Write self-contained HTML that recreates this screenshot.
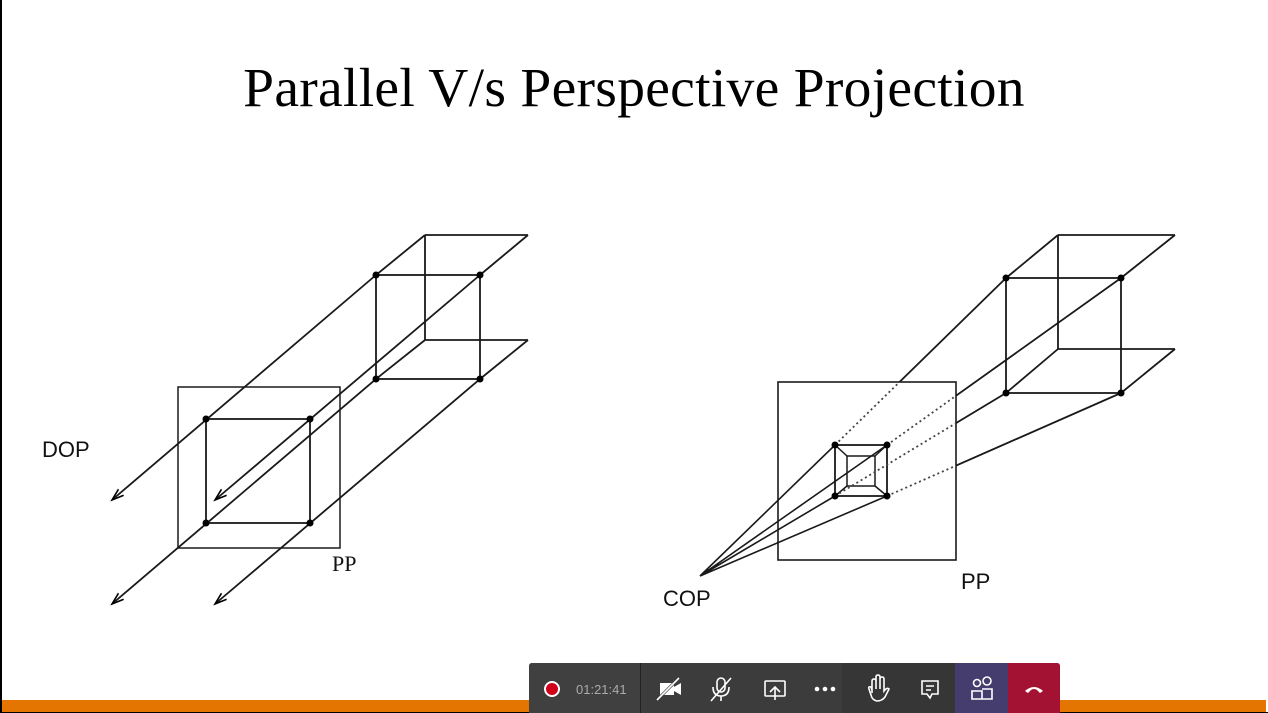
<!DOCTYPE html>
<html><head><meta charset="utf-8"><style>
body{margin:0;width:1268px;height:713px;overflow:hidden;background:#fff;position:relative;font-family:"Liberation Sans",sans-serif}
.t{position:absolute;left:0;width:1268px;top:57px;text-align:center;font-family:"Liberation Serif",serif;font-size:55.5px;color:#000;letter-spacing:0.3px;padding-left:0}
.bar{position:absolute;left:2px;top:700px;width:1264px;height:12px;background:#e37500}
.tb{position:absolute;left:529px;top:663px;width:531px;height:50px;background:#3c3c3c;border-radius:3px 3px 0 0;overflow:hidden}
.s{position:absolute;top:0;height:50px}
</style></head><body>
<div style="position:absolute;left:0;top:0;width:2px;height:713px;background:#000"></div>
<div style="position:absolute;left:0;top:712px;width:1268px;height:1px;background:#000"></div>
<div class="t">Parallel V/s Perspective Projection</div>
<svg width="1268" height="713" style="position:absolute;left:0;top:0" font-family="Liberation Sans">
<defs>
<clipPath id="in"><rect x="778" y="382" width="178" height="178"/></clipPath>
<mask id="out"><rect width="1268" height="713" fill="#fff"/><rect x="778" y="382" width="178" height="178" fill="#000"/></mask>
<marker id="ar" markerUnits="userSpaceOnUse" markerWidth="14" markerHeight="10" refX="12" refY="5" orient="auto"><path d="M0,1 L12,5 L0,9" fill="none" stroke="#000" stroke-width="1.6"/></marker>
</defs>
<g stroke="#1a1a1a" stroke-width="1.8" fill="none">
<rect x="178" y="387" width="162" height="161" stroke-width="1.5"/>
<rect x="206" y="419" width="104" height="104"/>
<rect x="376" y="275" width="104" height="104"/>
<path d="M425,235 H528 M425,235 V340 H528 M376,275 L425,235 M480,275 L528,235 M376,379 L425,340 M480,379 L528,340"/>
<path d="M376,275 L112,500" marker-end="url(#ar)"/>
<path d="M480,275 L215,500" marker-end="url(#ar)"/>
<path d="M376,379 L112,604" marker-end="url(#ar)"/>
<path d="M480,379 L215,604" marker-end="url(#ar)"/>
<rect x="778" y="382" width="178" height="178" stroke-width="1.6"/>
<rect x="1006" y="278" width="115" height="115"/>
<path d="M1058,235 H1175 M1058,235 V349 H1175 M1006,278 L1058,235 M1121,278 L1175,235 M1006,393 L1058,349 M1121,393 L1175,349"/>
<rect x="835" y="445" width="52" height="51"/>
<rect x="847" y="456" width="28" height="30" stroke-width="1.5"/>
<path d="M835,445 L847,456 M887,445 L875,456 M835,496 L847,486 M887,496 L875,486" stroke-width="1.5"/>
<path d="M700,576 L835,445 M700,576 L887,445 M700,576 L835,496 M700,576 L887,496" stroke-width="1.6"/>
<g mask="url(#out)"><path d="M835,445 L1006,278 M887,445 L1121,278 M835,496 L1006,393 M887,496 L1121,393"/></g>
<g clip-path="url(#in)" stroke-dasharray="2,3" stroke="#444"><path d="M835,445 L1006,278 M887,445 L1121,278 M835,496 L1006,393 M887,496 L1121,393"/></g>
</g>
<g fill="#000">
<circle cx="206" cy="419" r="3.5"/><circle cx="310" cy="419" r="3.5"/><circle cx="206" cy="523" r="3.5"/><circle cx="310" cy="523" r="3.5"/>
<circle cx="376" cy="275" r="3.5"/><circle cx="480" cy="275" r="3.5"/><circle cx="376" cy="379" r="3.5"/><circle cx="480" cy="379" r="3.5"/>
<circle cx="1006" cy="278" r="3.5"/><circle cx="1121" cy="278" r="3.5"/><circle cx="1006" cy="393" r="3.5"/><circle cx="1121" cy="393" r="3.5"/>
<circle cx="835" cy="445" r="3.5"/><circle cx="887" cy="445" r="3.5"/><circle cx="835" cy="496" r="3.5"/><circle cx="887" cy="496" r="3.5"/>
</g>
<text x="42" y="457" font-size="22" fill="#111">DOP</text>
<text x="332" y="571" font-size="22" font-family="Liberation Serif" fill="#111">PP</text>
<text x="663" y="606" font-size="22" fill="#111">COP</text>
<text x="961" y="589" font-size="22" fill="#111">PP</text>
</svg>
<div class="bar"></div>
<div class="tb">
<div class="s" style="left:0;width:111px;background:#404040"></div>
<div class="s" style="left:111px;width:1px;background:#222"></div>
<div class="s" style="left:313px;width:113px;background:#363636"></div>
<div class="s" style="left:426px;width:53px;background:#453d6e"></div>
<div class="s" style="left:479px;width:52px;background:#a31232"></div>
<svg width="531" height="50" style="position:absolute;left:0;top:0" fill="none" stroke="#fff" stroke-width="1.6">
<circle cx="23" cy="26" r="7" fill="#d0021b" stroke="#fff" stroke-width="2"/>
<text x="47" y="31" font-family="Liberation Sans" font-size="13" fill="#aaa" stroke="none">01:21:41</text>
<rect x="131" y="20" width="14" height="12" fill="#fff" stroke="none"/><path d="M145,24 L152,20 V32 L145,28Z" fill="#fff" stroke="none"/><path d="M128,37 L150,15" stroke="#3c3c3c" stroke-width="3"/><path d="M128,37 L150,15"/>
<rect x="188" y="15" width="8" height="14" rx="4"/><path d="M184,24 Q184,33 192,33 Q200,33 200,24 M192,33 V38 M182,38 L202,15"/>
<rect x="236" y="18" width="20" height="15" rx="1"/><path d="M246,37 V24 M241,29 L246,24 L251,29"/>
<circle cx="288" cy="26" r="2.3" fill="#fff" stroke="none"/><circle cx="296" cy="26" r="2.3" fill="#fff" stroke="none"/><circle cx="304" cy="26" r="2.3" fill="#fff" stroke="none"/>
<path d="M343,30 V18 Q343,16 345,16 Q347,16 347,18 V26 M347,18 V14 Q347,12 349,12 Q351,12 351,14 V26 M351,16 Q351,14 353,14 Q355,14 355,16 V28 Q358,24 360,26 L356,34 Q353,38 348,38 Q343,37 342,32 L340,26 Q339,23 342,24 L343,27"/>
<path d="M393,18 H409 V31 H403 L401,35 L398,31 H393Z M397,23 H405 M397,27 H402"/>
<circle cx="448" cy="20" r="3.5"/><circle cx="458" cy="18" r="4"/><path d="M443,36 V28 H453 V36 Z M453,36 H463 V26 H453"/>
<path d="M496,28 Q505,20 514,28 L511,30 L508,27 Q505,25 502,27 L499,30Z" fill="#fff" stroke="none"/>
</svg>
</div>
</body></html>
